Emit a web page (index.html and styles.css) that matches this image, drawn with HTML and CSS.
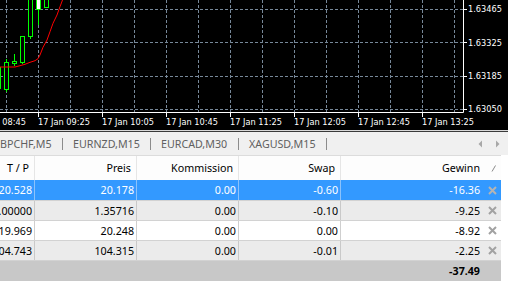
FILE: index.html
```html
<!DOCTYPE html>
<html lang="de">
<head>
  <meta charset="UTF-8">
  <title>Terminal</title>
  <link rel="stylesheet" href="styles.css">
</head>
<body>
  <div class="chart">
    <svg class="plot" width="508" height="130" viewBox="0 0 508 130">
      <!-- grid -->
      <path class="grid" d="M0 9.5H463M0 42.5H463M0 76.5H463M0 109.5H463"/>
      <path class="grid" d="M6.5 0V112M38.5 0V112M70.5 0V112M102.5 0V112M134.5 0V112M166.5 0V112M198.5 0V112M230.5 0V112M262.5 0V112M294.5 0V112M326.5 0V112M358.5 0V112M390.5 0V112M422.5 0V112M454.5 0V112"/>
      <!-- axes -->
      <path class="axis" d="M463.5 0V112.5H0"/>
      <path class="axis" d="M38.5 112V117M102.5 112V117M166.5 112V117M230.5 112V117M294.5 112V117M358.5 112V117M422.5 112V117"/>
      <path class="axis" d="M463 9.5H467M463 42.5H467M463 76.5H467M463 109.5H467"/>
      <!-- candles -->
      <path class="wick" d="M6.5 59V92M14.5 54V66M22.5 36V64M30.5 30V39M38.5 5V25"/>
      <rect class="bull" x="-4.5" y="67.5" width="5" height="21"/>
      <rect class="bull" x="4.5" y="62.5" width="4" height="27"/>
      <rect class="bull" x="12.5" y="61.5" width="4" height="2"/>
      <rect class="bull" x="20.5" y="36.5" width="4" height="26"/>
      <rect class="bull" x="28.5" y="-1" width="4" height="37.5"/>
      <rect class="bull white" x="36.5" y="-1" width="4" height="10.5"/>
      <rect class="bull" x="44.5" y="-1" width="4" height="8.5"/>
      <!-- moving average -->
      <polyline class="ma" points="0,67 15,67 20,65.7 25,64.3 30,62.3 35,60.7 38,58.7 40,55 43,47.3 47,40 50,31.7 53,23.3 57,15 60,6.7 62.5,0"/>
      <!-- labels -->
      <g class="lbl">
        <text x="468" y="12">1.63465</text>
        <text x="468" y="45.5">1.63325</text>
        <text x="468" y="79">1.63185</text>
        <text x="468" y="112">1.63050</text>
        <text x="-26" y="125">17 Jan 08:45</text>
        <text x="38" y="125">17 Jan 09:25</text>
        <text x="102" y="125">17 Jan 10:05</text>
        <text x="166" y="125">17 Jan 10:45</text>
        <text x="230" y="125">17 Jan 11:25</text>
        <text x="294" y="125">17 Jan 12:05</text>
        <text x="358" y="125">17 Jan 12:45</text>
        <text x="422" y="125">17 Jan 13:25</text>
      </g>
    </svg>
  </div>
  <div class="chart-edge"></div>

  <div class="tabs">
    <span class="tab first">BPCHF,M5</span>
    <span class="tab">EURNZD,M15</span>
    <span class="tab">EURCAD,M30</span>
    <span class="tab">XAGUSD,M15</span>
    <svg class="scroll" width="24" height="8" viewBox="0 0 24 8">
      <polygon points="5,0.5 1.5,4 5,7.5"/>
      <polygon points="19,0.5 22.5,4 19,7.5"/>
    </svg>
  </div>

  <div class="trades">
    <div class="row head">
      <div class="cell">T / P</div>
      <div class="cell">Preis</div>
      <div class="cell">Kommission</div>
      <div class="cell">Swap</div>
      <div class="cell gain">Gewinn<span class="x"><svg width="6" height="8" viewBox="0 0 6 8"><path class="sort" d="M1 7.5L4.5 1.5"/></svg></span></div>
    </div>
    <div class="row sel">
      <div class="cell">120.528</div>
      <div class="cell">20.178</div>
      <div class="cell">0.00</div>
      <div class="cell">-0.60</div>
      <div class="cell gain">-16.36<span class="x"><svg width="9" height="9" viewBox="0 0 9 9"><path d="M1 1L8 8M8 1L1 8"/></svg></span></div>
    </div>
    <div class="row alt">
      <div class="cell">0.00000</div>
      <div class="cell">1.35716</div>
      <div class="cell">0.00</div>
      <div class="cell">-0.10</div>
      <div class="cell gain">-9.25<span class="x"><svg width="9" height="9" viewBox="0 0 9 9"><path d="M1 1L8 8M8 1L1 8"/></svg></span></div>
    </div>
    <div class="row">
      <div class="cell">19.969</div>
      <div class="cell">20.248</div>
      <div class="cell">0.00</div>
      <div class="cell">0.00</div>
      <div class="cell gain">-8.92<span class="x"><svg width="9" height="9" viewBox="0 0 9 9"><path d="M1 1L8 8M8 1L1 8"/></svg></span></div>
    </div>
    <div class="row alt">
      <div class="cell">104.743</div>
      <div class="cell">104.315</div>
      <div class="cell">0.00</div>
      <div class="cell">-0.01</div>
      <div class="cell gain">-2.25<span class="x"><svg width="9" height="9" viewBox="0 0 9 9"><path d="M1 1L8 8M8 1L1 8"/></svg></span></div>
    </div>
    <div class="row total">
      <div class="cell"></div>
      <div class="cell"></div>
      <div class="cell"></div>
      <div class="cell"></div>
      <div class="cell gain">-37.49<span class="x"></span></div>
    </div>
  </div>
</body>
</html>
```

FILE: styles.css
```css
body {
  margin: 0;
  width: 508px;
  height: 302px;
  overflow: hidden;
  background: #fff;
  font-family: "Noto Sans", "Open Sans", sans-serif;
  font-size: 10.7px;
  color: #000;
}

/* chart */
.chart {
  height: 130px;
  background: #000;
}

.plot {
  display: block;
}

.plot .grid {
  fill: none;
  stroke: #778899;
  stroke-width: 1;
  stroke-dasharray: 3 2;
}

.plot .axis {
  fill: none;
  stroke: #fff;
  stroke-width: 1;
}

.plot .wick {
  fill: none;
  stroke: #00ff00;
  stroke-width: 1;
}

.plot .bull {
  fill: #000;
  stroke: #00ff00;
  stroke-width: 1;
}

.plot .bull.white {
  fill: #fff;
}

.plot .ma {
  fill: none;
  stroke: #ff0000;
  stroke-width: 1;
}

.plot .lbl {
  fill: #fff;
  font-family: "DejaVu Sans", sans-serif;
  font-size: 8.2px;
}

.chart-edge {
  height: 1px;
  background: #d8d8d8;
  border-bottom: 1px solid #3a3a3a;
}

/* symbol tabs */
.tabs {
  display: flex;
  align-items: center;
  height: 23px;
  background: #f0f0f0;
  color: #606060;
  white-space: nowrap;
}

.tab {
  box-sizing: border-box;
  width: 88px;
  height: 12px;
  line-height: 12px;
  padding-left: 10px;
  border-right: 1px solid #8c8c8c;
}

.tab.first {
  width: 63px;
  padding-left: 0;
}

.scroll {
  margin-left: auto;
  margin-right: 7px;
  fill: #a8a8a8;
}

/* trade list */
.trades {
  width: 501px;
  border-top: 1px solid #dcdcdc;
}

.row {
  display: grid;
  grid-template-columns: 35px 102px 102px 102px 160px;
  height: 20px;
  box-sizing: border-box;
  border-bottom: 1px solid #d2d2d2;
}

.cell {
  box-sizing: border-box;
  display: flex;
  justify-content: flex-end;
  align-items: center;
  padding-right: 2px;
  border-right: 1px solid #cfcfcf;
  overflow: hidden;
  white-space: nowrap;
}

.cell.gain {
  border-right: none;
  padding-right: 0;
}

.x {
  box-sizing: border-box;
  width: 21px;
  padding-left: 4px;
  display: flex;
  justify-content: center;
  align-items: center;
}

.x svg path {
  fill: none;
  stroke: #a2a2a2;
  stroke-width: 2;
}

.x svg .sort {
  stroke: #8a8a8a;
  stroke-width: 1;
}

.head {
  height: 24px;
  background: #fdfdfd;
  border-bottom: none;
}

.head .cell {
  padding-right: 5px;
  border-right-color: #e6e6e6;
}

.head .cell.gain {
  padding-right: 0;
}

.head .gain .x {
  margin-left: 3px;
  width: 18px;
}

.sel {
  height: 21px;
  background: #3399ff;
  color: #fff;
}

.sel .cell {
  border-right-color: #8cc2fb;
}

.sel .x svg path {
  stroke: #b4b4b4;
}

.alt {
  background: #ebebeb;
}

.alt .cell {
  border-right-color: #c9c9c9;
}

.total {
  background: #c8c8c8;
  border-bottom: none;
  font-weight: bold;
}

.total .cell {
  border-right: none;
}
```
